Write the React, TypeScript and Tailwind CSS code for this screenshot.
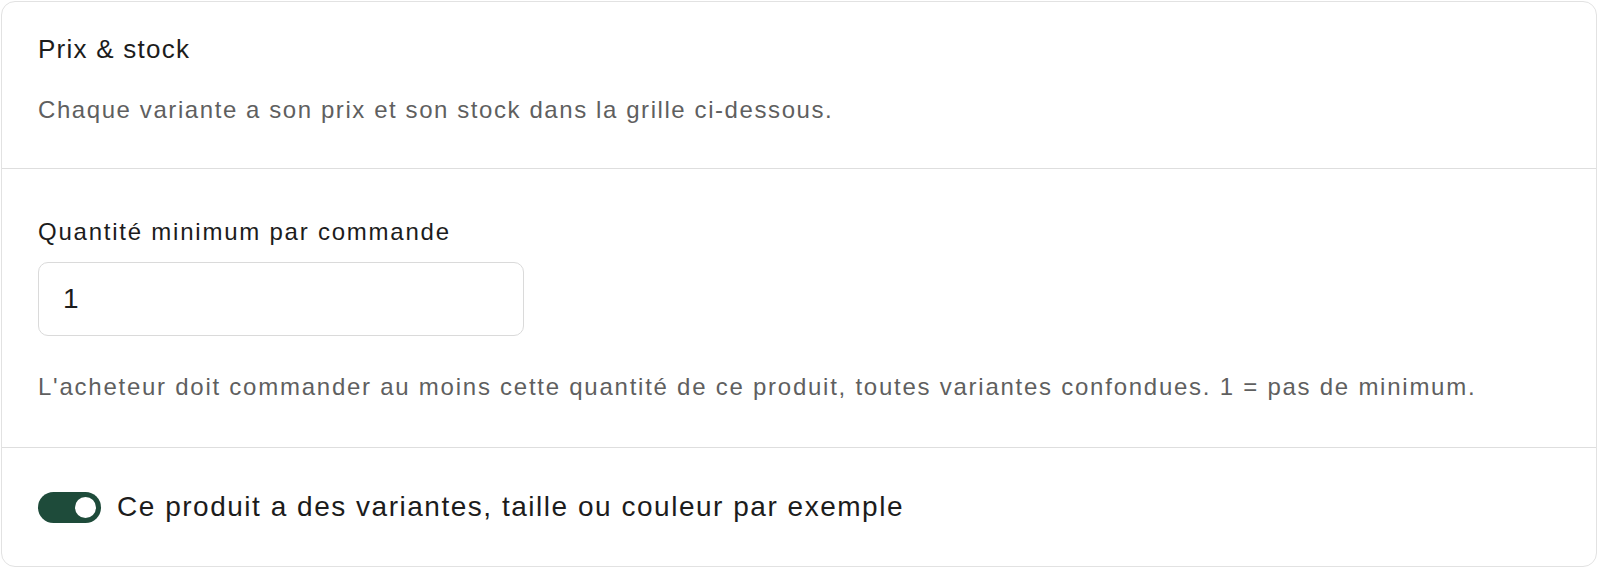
import React from "react";

export default function App() {
  return (
    <div className="bg-white w-[1600px] h-[570px] p-px" style={{ fontFamily: '"Liberation Sans", Arial, sans-serif' }}>
      <div className="w-[1596px] h-[566px] rounded-[14px] border border-[#e2e2e2] bg-white flex flex-col overflow-hidden">
        <div className="px-9 pt-[31px] pb-[42px] border-b border-[#dedede]">
          <div className="text-[26px] leading-[32px] tracking-[1.25px] text-[#1c1c1c]">Prix &amp; stock</div>
          <div className="mt-[29px] text-[24px] leading-[32px] tracking-[1.58px] text-[#5f5f5f]">
            Chaque variante a son prix et son stock dans la grille ci-dessous.
          </div>
        </div>
        <div className="px-9 pt-[47px] pb-[44px] border-b border-[#dedede]">
          <div className="text-[24px] leading-[32px] tracking-[1.77px] text-[#1c1c1c]">Quantité minimum par commande</div>
          <div className="mt-[14px] w-[486px] h-[74px] rounded-[10px] border border-[#dadada] flex items-center px-[24px] text-[28px] text-[#1c1c1c]">
            1
          </div>
          <div className="mt-[35px] text-[24px] leading-[32px] tracking-[1.75px] text-[#5f5f5f]">
            L'acheteur doit commander au moins cette quantité de ce produit, toutes variantes confondues. 1 = pas de minimum.
          </div>
        </div>
        <div className="flex-1 px-9 flex items-center gap-[16px]">
          <div className="w-[63px] h-[31px] rounded-full bg-[#1e4b3a] flex items-center justify-end pr-[5px]">
            <div className="w-[21px] h-[21px] rounded-full bg-white" />
          </div>
          <div className="text-[28px] leading-[32px] tracking-[1.52px] text-[#1c1c1c]">Ce produit a des variantes, taille ou couleur par exemple</div>
        </div>
      </div>
    </div>
  );
}
